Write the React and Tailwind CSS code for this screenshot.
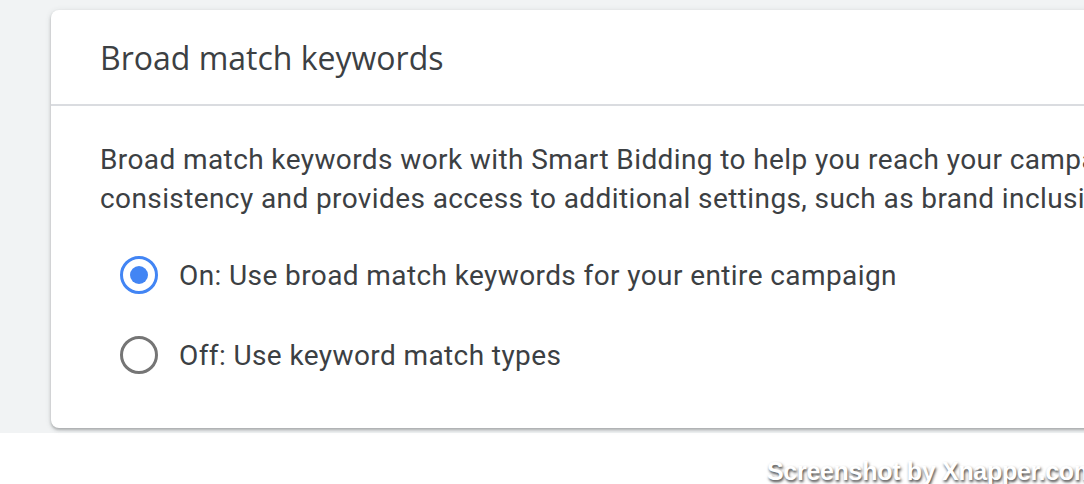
import React from "react";

const Radio = ({ checked, label }) => (
  <label className="flex items-center h-[40px] gap-[21px]">
    <span
      className={`flex items-center justify-center w-[38px] h-[38px] rounded-full border-[3px] ${
        checked ? "border-[#4285f4]" : "border-[#757575]"
      }`}
    >
      {checked && <span className="block w-[18px] h-[18px] rounded-full bg-[#4285f4]" />}
    </span>
    <span>{label}</span>
  </label>
);

export default function App() {
  return (
    <div className="relative w-[1084px] h-[484px] overflow-hidden bg-white">
      <div className="h-[433px] bg-[#f1f3f4] pl-[51px] pt-[10px]">
        <div className="w-[1100px] h-[418px] rounded-[8px] bg-white shadow-[0_2px_3px_rgba(60,64,67,0.35),0_1px_6px_rgba(60,64,67,0.12)]">
          <div className="h-[96px] border-b-2 border-[#dadce0] flex items-center pl-[49px]">
            <h1 className="text-[32px] text-[#3c4043] font-['Open_Sans',sans-serif] pt-[2px]">
              Broad match keywords
            </h1>
          </div>
          <div className="pl-[49px] pt-[34px] text-[28px] leading-[39px] text-[#3c4043] font-['Roboto',sans-serif] tracking-[0.4px]">
            <p className="whitespace-nowrap">
              Broad match keywords work with Smart Bidding to help you reach your campaign goals with greater
              <br />
              consistency and provides access to additional settings, such as brand inclusions
            </p>
            <div className="pl-[20px] pt-[37px] flex flex-col gap-[40px]">
              <Radio checked label="On: Use broad match keywords for your entire campaign" />
              <Radio label="Off: Use keyword match types" />
            </div>
          </div>
        </div>
      </div>
      <div className="absolute left-[767px] top-[453px] whitespace-nowrap text-[25px] font-bold text-white font-['Liberation_Sans',sans-serif] tracking-[-0.3px] [text-shadow:1px_2px_3px_rgba(0,0,0,0.75)]">
        Screenshot by Xnapper.com
      </div>
    </div>
  );
}
